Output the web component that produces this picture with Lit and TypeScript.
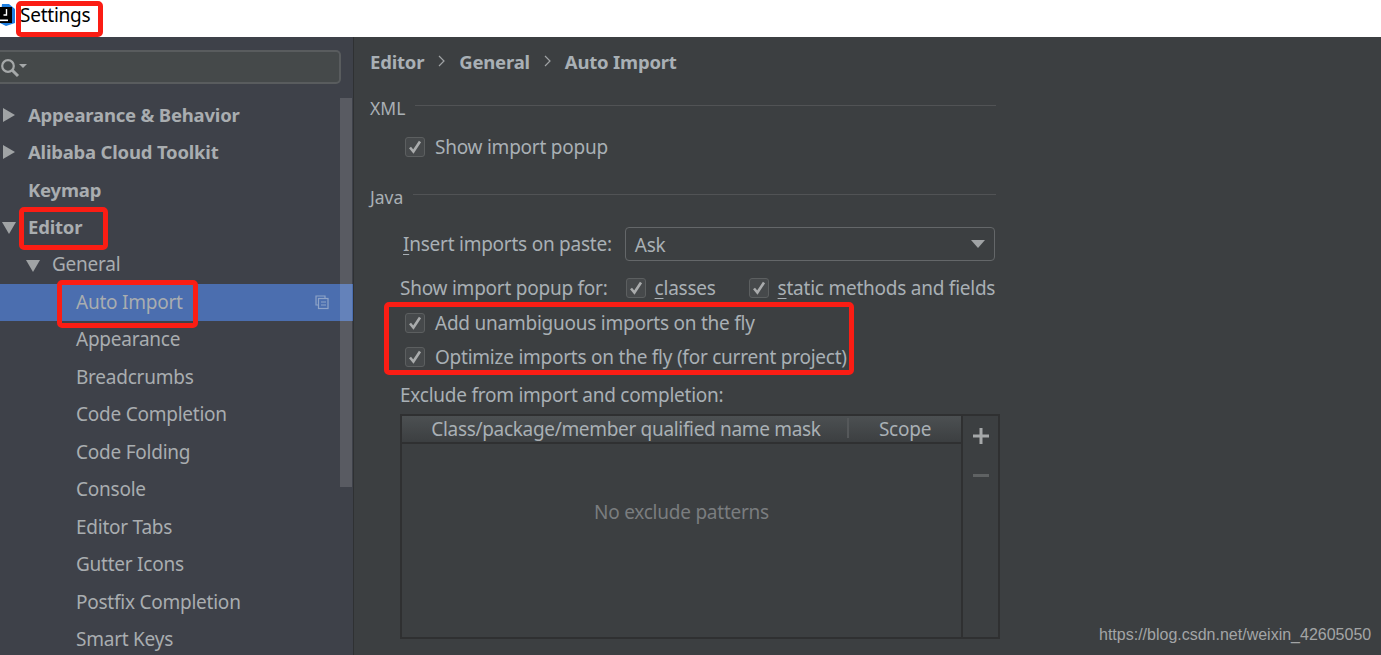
import { LitElement, html, css } from "lit";
import { customElement } from "lit/decorators.js";

const tree = [
  { t: "Appearance & Behavior", lvl: 0, bold: true, arrow: "r" },
  { t: "Alibaba Cloud Toolkit", lvl: 0, bold: true, arrow: "r" },
  { t: "Keymap", lvl: 0, bold: true },
  { t: "Editor", lvl: 0, bold: true, arrow: "d" },
  { t: "General", lvl: 1, arrow: "d" },
  { t: "Auto Import", lvl: 2, sel: true },
  { t: "Appearance", lvl: 2 },
  { t: "Breadcrumbs", lvl: 2 },
  { t: "Code Completion", lvl: 2 },
  { t: "Code Folding", lvl: 2 },
  { t: "Console", lvl: 2 },
  { t: "Editor Tabs", lvl: 2 },
  { t: "Gutter Icons", lvl: 2 },
  { t: "Postfix Completion", lvl: 2 },
  { t: "Smart Keys", lvl: 2 },
];

const check = () => html`<span class="cb"><svg width="14" height="14" viewBox="0 0 14 14"><path d="M2 7.5 L5.4 11.5 L12 1.5" fill="none" stroke="#a9abac" stroke-width="2.6"/></svg></span>`;
const chev = () => html`<svg width="8" height="12" viewBox="0 0 8 12"><path d="M1 1 L6 6 L1 11" fill="none" stroke="#a0a3a5" stroke-width="1.2"/></svg>`;

@customElement("app-root")
export class AppRoot extends LitElement {
  static styles = css`
    :host { display: block; width: 1381px; height: 655px; overflow: hidden; position: relative; font-family: "Noto Sans", "Open Sans", sans-serif; font-size: 19px; letter-spacing: -0.24px; color: #a9b0b5; background: #3c3f41; }
    .title { height: 37px; background: #fff; display: flex; align-items: center; color: #000; }
    .title svg { flex: none; margin-top: -8px; }
    .title span { margin-left: 5px; margin-top: -8px; }
    .body { display: flex; height: 618px; }
    .side { width: 353px; flex: none; background: #3e4149; border-right: 1px solid #2f3133; display: flex; flex-direction: column; position: relative; }
    .searchwrap { height: 59px; padding: 13px 12px 0 0; box-sizing: border-box; flex: none; }
    .search { height: 34px; background: #45494a; border: 2px solid #595c5e; border-left: none; border-radius: 0 5px 5px 0; box-sizing: border-box; display: flex; align-items: center; }
    .tree { display: grid; grid-auto-rows: 37.5px; }
    .row { display: flex; align-items: center; position: relative; white-space: nowrap; color: #a9adb0; padding-bottom: 1px; box-sizing: border-box; }
    .row.b, .crumbs { font-weight: 700; font-size: 18.5px; letter-spacing: -0.2px; }
    .row.sel { background: #4b6eaf; }
    .arrow { position: absolute; top: 50%; }
    .row.l0 { padding-left: 28px; }
    .row.l1 { padding-left: 52px; }
    .row.l2 { padding-left: 76px; }
    .copy { position: absolute; left: 315px; top: 11px; }
    .thumb { position: absolute; left: 340px; top: 61px; width: 12px; height: 389px; background: rgba(255,255,255,0.14); }
    .main { flex: 1; padding: 0 0 0 16px; min-width: 0; }
    .crumbs { display: flex; align-items: center; height: 48px; }
    .crumbs svg { margin: 0 13px 0 14px; }
    .sect { width: 626px; display: flex; align-items: center; gap: 10px; height: 22px; font-size: 17.5px; letter-spacing: 0; }
    .sect i { flex: 1; height: 1px; background: #515355; margin-top: -6px; }
    .line { display: flex; align-items: center; height: 34px; white-space: nowrap; }
    .ind { padding-left: 35px; }
    .cb { width: 20px; height: 20px; box-sizing: border-box; border: 1px solid #5c5f60; background: #46494b; border-radius: 3px; display: inline-flex; align-items: center; justify-content: center; flex: none; margin-right: 10px; }
    u { text-underline-offset: 3px; }
    .combo { width: 370px; height: 34px; box-sizing: border-box; border: 1px solid #646769; border-radius: 4px; display: flex; align-items: center; justify-content: space-between; padding: 0 9px; margin-left: 13px; }
    .combo span { position: relative; top: 1px; }
    .table { width: 600px; height: 225px; margin-left: 30px; margin-top: 2px; box-sizing: border-box; border: 2px solid #2f3031; display: flex; }
    .tmain { width: 559px; display: flex; flex-direction: column; flex: none; }
    .thead { height: 26px; flex: none; display: flex; background: linear-gradient(#4c5052, #3c3f41); border-bottom: 2px solid #2f3031; }
    .c1 { width: 445px; text-align: center; box-sizing: border-box; line-height: 26px; flex: none; letter-spacing: -0.32px; padding-left: 3px; }
    .c2 { flex: 1; text-align: center; line-height: 24px; border-left: 2px solid #55585a; height: 20px; margin-top: 2px; }
    .c2 span { position: relative; top: -1px; }
    .empty { flex: 1; display: flex; align-items: center; justify-content: center; color: #7a7d7f; padding-bottom: 58px; }
    .tools { flex: 1; border-left: 2px solid #2f3031; display: flex; flex-direction: column; align-items: center; padding-top: 12px; gap: 30px; }
    .wm { position: absolute; left: 1099px; top: 626px; font-family: "Liberation Sans", Arial, sans-serif; font-size: 16px; letter-spacing: 0; color: #a3a5a6; white-space: nowrap; }
    .red { position: absolute; border: 5px solid #fb1d14; border-radius: 5px; box-sizing: border-box; }
    .r1 { left: 16px; top: 1px; width: 87px; height: 36px; }
    .r2 { left: 19px; top: 207px; width: 89px; height: 43px; }
    .r3 { left: 57px; top: 280px; width: 141px; height: 48px; }
    .r4 { left: 384px; top: 302px; width: 470px; height: 73px; }
  `;

  render() {
    return html`
      <div class="title">
        <svg width="15" height="22" viewBox="0 0 15 22">
          <path d="M2 0 L9 0 L15 5 L15 19 L6 22 L0 19Z" fill="#1f7fe0"/>
          <rect x="-1" y="3" width="13" height="16" fill="#000"/>
          <rect x="0" y="15.5" width="8" height="1.6" fill="#fff"/>
          <path d="M6.5 5 V11 H3.5" fill="none" stroke="#fff" stroke-width="1.4"/>
        </svg>
        <span>Settings</span>
      </div>
      <div class="body">
        <div class="side">
          <div class="searchwrap"><div class="search">
            <svg width="30" height="26" viewBox="0 0 30 26"><circle cx="8" cy="12" r="5.8" fill="none" stroke="#a5a8a9" stroke-width="2.2"/><path d="M12 16 L18 22" stroke="#a5a8a9" stroke-width="3"/><path d="M19 10 H27 L23 14Z" fill="#a5a8a9"/></svg>
          </div></div>
          <div class="tree">
            ${tree.map((r) => html`
              <div class="row l${r.lvl} ${r.bold ? "b" : ""} ${r.sel ? "sel" : ""}">
                ${r.arrow === "r" ? html`<svg class="arrow" style="left:3px;margin-top:-7px" width="13" height="14" viewBox="0 0 13 14"><path d="M0 0 L12 7 L0 14Z" fill="#a0a3a5"/></svg>` : ""}
                ${r.arrow === "d" ? html`<svg class="arrow" style="left:${r.lvl === 0 ? 2 : 26}px;margin-top:-5px" width="14" height="12" viewBox="0 0 14 12"><path d="M0 0 H14 L7 12Z" fill="#a0a3a5"/></svg>` : ""}
                ${r.t}
                ${r.sel ? html`<svg class="copy" width="14" height="15" viewBox="0 0 14 15" fill="none" stroke="#8ea3c7" stroke-width="1.2"><path d="M10 3 V1 H1 V10 H3"/><rect x="3.5" y="3.5" width="9.5" height="10"/><path d="M6 7 H11 M6 10 H11"/></svg>` : ""}
              </div>`)}
          </div>
          <div class="thumb"></div>
        </div>
        <div class="main">
          <div class="crumbs">Editor${chev()}General${chev()}Auto Import</div>
          <div class="sect" style="margin-top:12px">XML<i></i></div>
          <div class="line ind" style="margin-top:11px">${check()}Show import popup</div>
          <div class="sect" style="margin-top:22px">Java<i></i></div>
          <div class="line" style="margin-top:19px;padding-left:33px"><span><u>I</u>nsert imports on paste:</span><div class="combo"><span>Ask</span><svg width="14" height="8" viewBox="0 0 14 8"><path d="M0 0 H14 L7 8Z" fill="#a0a3a5"/></svg></div></div>
          <div class="line" style="margin-top:10px;padding-left:30px"><span style="margin-right:18px">Show import popup for:</span>${check()}<span style="margin-left:-1px;margin-right:33px"><u>c</u>lasses</span>${check()}<span style="margin-left:-1px"><u>s</u>tatic methods and fields</span></div>
          <div class="line ind" style="margin-top:1px">${check()}Add unambiguous imports on the fly</div>
          <div class="line ind">${check()}Optimize imports on the fly (for current project)</div>
          <div class="line" style="padding-left:30px;margin-top:4px">Exclude from import and completion:</div>
          <div class="table">
            <div class="tmain">
              <div class="thead"><div class="c1">Class/package/member qualified name mask</div><div class="c2"><span>Scope</span></div></div>
              <div class="empty">No exclude patterns</div>
            </div>
            <div class="tools">
              <svg width="16" height="16" viewBox="0 0 16 16"><path d="M8 0 V16 M0 8 H16" stroke="#a5a8a9" stroke-width="3"/></svg>
              <svg width="16" height="3" viewBox="0 0 16 3"><rect width="16" height="3" fill="#5f6263"/></svg>
            </div>
          </div>
        </div>
      </div>
      <div class="wm">https://blog.csdn.net/weixin_42605050</div>
      <div class="red r1"></div>
      <div class="red r2"></div>
      <div class="red r3"></div>
      <div class="red r4"></div>
    `;
  }
}
